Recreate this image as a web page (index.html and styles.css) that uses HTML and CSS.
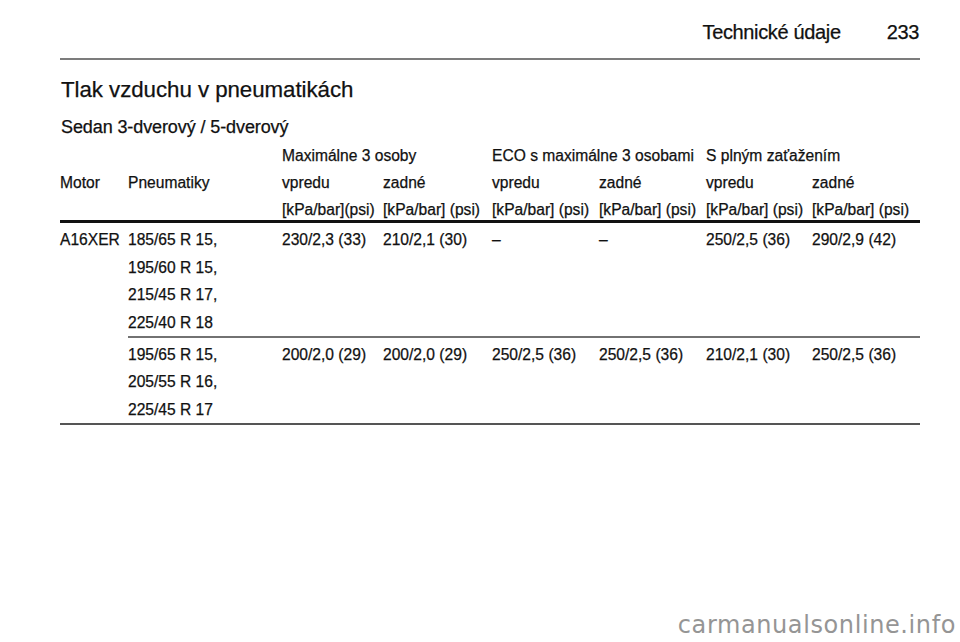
FILE: index.html
```html
<!DOCTYPE html>
<html lang="sk">
<head>
<meta charset="utf-8">
<title>Technické údaje 233</title>
<link rel="stylesheet" href="styles.css">
</head>
<body>
<div class="page">
  <header class="page-head">
    <span class="chapter">Technické údaje</span>
    <span class="pageno">233</span>
  </header>
  <h1 class="title">Tlak vzduchu v pneumatikách</h1>
  <h2 class="subtitle">Sedan 3-dverový / 5-dverový</h2>
  <table class="tyres">
    <colgroup>
      <col class="c-motor"><col class="c-tyre"><col class="c-a"><col class="c-b"><col class="c-c"><col class="c-d"><col class="c-e"><col class="c-f">
    </colgroup>
    <thead>
      <tr class="h1">
        <th></th><th></th>
        <th colspan="2">Maximálne 3 osoby</th>
        <th colspan="2">ECO s maximálne 3 osobami</th>
        <th colspan="2">S plným zaťažením</th>
      </tr>
      <tr class="h2">
        <th>Motor</th><th>Pneumatiky</th>
        <th>vpredu</th><th>zadné</th>
        <th>vpredu</th><th>zadné</th>
        <th>vpredu</th><th>zadné</th>
      </tr>
      <tr class="h3">
        <th></th><th></th>
        <th>[kPa/bar](psi)</th><th>[kPa/bar] (psi)</th>
        <th>[kPa/bar] (psi)</th><th>[kPa/bar] (psi)</th>
        <th>[kPa/bar] (psi)</th><th>[kPa/bar] (psi)</th>
      </tr>
    </thead>
    <tbody>
      <tr class="g1">
        <td class="motor" rowspan="2">A16XER</td>
        <td><div>185/65 R 15,</div><div>195/60 R 15,</div><div>215/45 R 17,</div><div>225/40 R 18</div></td>
        <td>230/2,3 (33)</td><td>210/2,1 (30)</td>
        <td>–</td><td>–</td>
        <td>250/2,5 (36)</td><td>290/2,9 (42)</td>
      </tr>
      <tr class="g2">
        <td><div>195/65 R 15,</div><div>205/55 R 16,</div><div>225/45 R 17</div></td>
        <td>200/2,0 (29)</td><td>200/2,0 (29)</td>
        <td>250/2,5 (36)</td><td>250/2,5 (36)</td>
        <td>210/2,1 (30)</td><td>250/2,5 (36)</td>
      </tr>
    </tbody>
  </table>
</div>
<div class="watermark">carmanualsonline.info</div>
</body>
</html>
```

FILE: styles.css
```css
html, body {
  margin: 0;
  padding: 0;
  background: #ffffff;
}

body {
  width: 960px;
  height: 642px;
  position: relative;
  overflow: hidden;
  font-family: "Liberation Sans", Arial, Helvetica, sans-serif;
  color: #111111;
}

.page {
  padding: 0 40px 0 60px;
  -webkit-text-stroke: 0.25px #111111;
}

.page-head {
  display: flex;
  justify-content: flex-end;
  gap: 46px;
  padding: 20px 1px 14px 0;
  font-size: 20px;
  line-height: 24px;
  letter-spacing: -0.35px;
  border-bottom: 2px solid #7c7c7c;
}

.title {
  margin: 17px 0 0 1px;
  font-size: 22.3px;
  line-height: 26px;
  font-weight: normal;
  letter-spacing: -0.05px;
}

.subtitle {
  margin: 13px 0 0 1px;
  font-size: 18px;
  line-height: 22px;
  font-weight: normal;
  letter-spacing: -0.1px;
}

.tyres {
  margin-top: 4px;
  width: 860px;
  border-collapse: collapse;
  table-layout: fixed;
  font-size: 15.6px;
  white-space: nowrap;
}

.c-motor { width: 68px; }
.c-tyre { width: 154px; }
.c-a { width: 101px; }
.c-b { width: 109px; }
.c-c { width: 107px; }
.c-d { width: 107px; }
.c-e { width: 106px; }
.c-f { width: 108px; }

.tyres th {
  padding: 0;
  text-align: left;
  font-weight: normal;
  line-height: 27px;
  height: 27px;
  vertical-align: top;
  overflow: visible;
}

.tyres .h3 th {
  padding-top: 3px;
  line-height: 21px;
  height: 21px;
  border-bottom: 3px solid #111111;
}

.tyres td {
  padding: 0;
  line-height: 27.5px;
  vertical-align: top;
  overflow: visible;
}

.tyres .g1 td {
  padding-top: 3px;
  border-bottom: 2px solid #727272;
}

.tyres .g1 td.motor {
  border-bottom: 2px solid #555555;
}

.tyres .g2 td {
  padding-top: 2.5px;
  padding-bottom: 0;
  border-bottom: 2px solid #555555;
}

.watermark {
  position: absolute;
  right: 4px;
  top: 610px;
  font-family: "DejaVu Sans", "Liberation Sans", sans-serif;
  font-size: 24px;
  line-height: 30px;
  letter-spacing: 0.6px;
  color: #959595;
}
```
